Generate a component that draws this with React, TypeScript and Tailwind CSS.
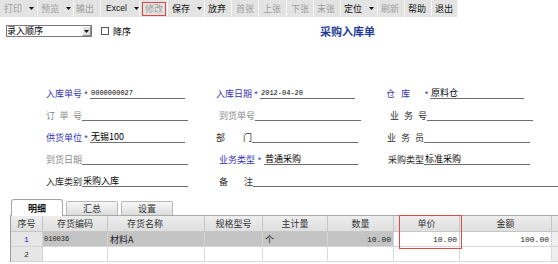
import React from "react";

type Tool = { t: string; w: string; pl: string; a?: boolean; on?: boolean; red?: boolean; latin?: boolean };

const tools: Tool[] = [
  { t: "打印", w: "w-[38px]", pl: "pl-[4px]", a: true },
  { t: "预览", w: "w-[36px]", pl: "pl-[3px]", a: true },
  { t: "输出", w: "w-[27px]", pl: "pl-[2px]" },
  { t: "Excel", w: "w-[39px]", pl: "pl-[5px]", a: true, on: true, latin: true },
  { t: "修改", w: "w-[28px]", pl: "pl-[2px]", red: true },
  { t: "保存", w: "w-[37px]", pl: "pl-[4px]", a: true, on: true },
  { t: "放弃", w: "w-[27px]", pl: "pl-[3px]", on: true },
  { t: "首张", w: "w-[27px]", pl: "pl-[4px]" },
  { t: "上张", w: "w-[28px]", pl: "pl-[4px]" },
  { t: "下张", w: "w-[27px]", pl: "pl-[4px]" },
  { t: "末张", w: "w-[27px]", pl: "pl-[3px]" },
  { t: "定位", w: "w-[37px]", pl: "pl-[3px]", a: true, on: true },
  { t: "刷新", w: "w-[27px]", pl: "pl-[3px]" },
  { t: "帮助", w: "w-[27px]", pl: "pl-[3px]", on: true },
  { t: "退出", w: "w-[26px]", pl: "pl-[3px]", on: true },
];

function Arrow({ cls }: { cls: string }) {
  return (
    <svg width="5" height="3" viewBox="0 0 5 3" className={`block shrink-0 ${cls}`}>
      <path d="M0 0H5L2.5 3Z" fill="#111" />
    </svg>
  );
}

const Lbl = ({ c, cls }: { c: string[]; cls: string }) => (
  <span className={`flex justify-between leading-[11px] shrink-0 ${cls}`}>
    {c.map((x, i) => (
      <span key={i}>{x}</span>
    ))}
  </span>
);

const Star = ({ cls }: { cls: string }) => (
  <span className={`shrink-0 text-center text-[#3434b8] font-['Liberation_Sans',sans-serif] text-[9px] leading-[9px] ${cls}`}>*</span>
);

const Line = ({ cls, v, mono }: { cls: string; v?: string; mono?: boolean }) => (
  <div className={`h-[13px] border-b border-[#6e6e6e] flex items-end shrink-0 ${cls}`}>
    {v ? (
      <span
        className={
          mono
            ? "pl-[1px] leading-[10px] text-[7px] text-black font-['Liberation_Mono',monospace]"
            : "pl-[1px] leading-[11px] text-black"
        }
      >
        {v}
      </span>
    ) : null}
  </div>
);

const BLUE = "text-[#3434b8]";
const GRAY = "text-[#8a8a8a]";
const DARK = "text-[#2a2a2a]";

const cols = [
  { h: "序号", w: "w-[32px]", j: "justify-center" },
  { h: "存货编码", w: "w-[65px]", j: "justify-center" },
  { h: "存货名称", w: "w-[97px]", j: "justify-start pl-[19px]" },
  { h: "规格型号", w: "w-[58px]", j: "justify-center" },
  { h: "主计量", w: "w-[65px]", j: "justify-center" },
  { h: "数量", w: "w-[66px]", j: "justify-center" },
  { h: "单价", w: "w-[66px]", j: "justify-center" },
  { h: "金额", w: "w-[92px]", j: "justify-center" },
];

export default function App() {
  return (
    <div className="relative w-[558px] h-[264px] overflow-hidden bg-white text-[9px] font-['Noto_Sans_CJK_SC','Noto_Sans',sans-serif]">
      {/* toolbar */}
      <div className="flex h-[17px] w-[458px] bg-[#e3e3e3] leading-[11px]">
        {tools.map((b, i) => (
          <div key={i} className={`flex items-center h-full border-r border-[#f6f6f6] ${b.w} ${b.pl}`}>
            {b.red ? (
              <span className="flex items-center h-[14px] px-[2px] border border-[#e04545] text-[#9c9c9c]">{b.t}</span>
            ) : (
              <span
                className={`${b.on ? "text-[#111]" : "text-[#9c9c9c]"} ${
                  b.latin ? "font-['Liberation_Sans',sans-serif] text-[8.5px]" : ""
                }`}
              >
                {b.t}
              </span>
            )}
            {b.a ? <Arrow cls="ml-[7px]" /> : null}
          </div>
        ))}
      </div>

      {/* select row + title */}
      <div className="flex items-center h-[12px] mt-[8px]">
        <div className="w-[320px] flex items-center">
          <div className="ml-[6px] w-[86px] h-[12px] border border-[#7a7a7a] flex items-center justify-between bg-white">
            <span className="leading-[10px] text-black">录入顺序</span>
            <span className="w-[9px] h-[10px] bg-[#e0e0e0] border border-t-white border-l-white border-r-[#8a8a8a] border-b-[#8a8a8a] flex items-center justify-center">
              <Arrow cls="" />
            </span>
          </div>
          <span className="ml-[9px] w-[8px] h-[8px] border border-[#555] bg-white shrink-0" />
          <span className="ml-[4px] leading-[11px] text-black">降序</span>
        </div>
        <span className="text-[11px] font-bold leading-[13px] text-[#1f3c9a]">采购入库单</span>
      </div>

      {/* form */}
      <div className="mt-[40px] flex flex-col">
        <div className="flex items-end h-[22px] pl-[46px]">
          <div className="w-[170px] flex items-end">
            <Lbl c={["入库单号"]} cls={`w-[36px] ${BLUE}`} />
            <Star cls="w-[8px]" />
            <Line cls="w-[95px]" v="0000000027" mono />
          </div>
          <div className="w-[170px] flex items-end">
            <Lbl c={["入库日期"]} cls={`w-[36px] ${BLUE}`} />
            <Star cls="w-[8px]" />
            <Line cls="w-[95px]" v="2012-04-20" mono />
          </div>
          <div className="flex-1 flex items-end">
            <Lbl c={["仓", "库"]} cls={`w-[24px] ${BLUE}`} />
            <Star cls="w-[20px] pl-[13px]" />
            <Line cls="w-[94px]" v="原料仓" />
          </div>
        </div>

        <div className="flex items-end h-[22px] pl-[46px]">
          <div className="w-[170px] flex items-end">
            <Lbl c={["订", "单", "号"]} cls={`w-[36px] ${GRAY}`} />
            <Line cls="w-[106px]" />
          </div>
          <div className="w-[170px] flex items-end">
            <Lbl c={["到货单号"]} cls={`ml-[3px] w-[36px] ${GRAY}`} />
            <Line cls="w-[106px]" />
          </div>
          <div className="flex-1 flex items-end">
            <Lbl c={["业", "务", "号"]} cls={`ml-[4px] w-[37px] ${DARK}`} />
            <Line cls="w-[106px]" />
          </div>
        </div>

        <div className="flex items-end h-[22px] pl-[46px]">
          <div className="w-[170px] flex items-end">
            <Lbl c={["供货单位"]} cls={`w-[36px] ${BLUE}`} />
            <Star cls="w-[8px]" />
            <Line cls="w-[95px]" v="无锡100" />
          </div>
          <div className="w-[170px] flex items-end">
            <Lbl c={["部", "门"]} cls={`w-[36px] ${DARK}`} />
            <Line cls="w-[106px]" />
          </div>
          <div className="flex-1 flex items-end">
            <Lbl c={["业", "务", "员"]} cls={`ml-[1px] w-[37px] ${DARK}`} />
            <Line cls="w-[106px]" />
          </div>
        </div>

        <div className="flex items-end h-[22px] pl-[46px]">
          <div className="w-[170px] flex items-end">
            <Lbl c={["到货日期"]} cls={`w-[36px] ${GRAY}`} />
            <Line cls="w-[106px]" />
          </div>
          <div className="w-[170px] flex items-end">
            <Lbl c={["业务类型"]} cls={`ml-[3px] w-[36px] ${BLUE}`} />
            <Star cls="w-[9px]" />
            <Line cls="w-[94px]" v="普通采购" />
          </div>
          <div className="flex-1 flex items-end">
            <Lbl c={["采购类型"]} cls={`ml-[2px] w-[36px] ${DARK}`} />
            <Line cls="w-[106px]" v="标准采购" />
          </div>
        </div>

        <div className="flex items-end h-[22px] pl-[46px]">
          <div className="w-[170px] flex items-end">
            <Lbl c={["入库类别"]} cls={`w-[36px] ${DARK}`} />
            <Line cls="w-[106px]" v="采购入库" />
          </div>
          <div className="flex-1 flex items-end">
            <Lbl c={["备", "注"]} cls={`ml-[3px] w-[34px] ${DARK}`} />
            <Line cls="flex-1" />
          </div>
        </div>
      </div>

      {/* tabs */}
      <div className="ml-[10px] mt-[12px] h-[17px] flex items-end pl-[1px] border-b border-[#a8a8a8] leading-[11px]">
        <div className="-mb-px w-[52px] h-[17px] border border-b-0 border-[#a5a5a5] rounded-t-[3px] bg-white font-bold text-[#111] flex items-center justify-center">
          明细
        </div>
        <div className="ml-[3px] w-[52px] h-[14px] border border-b-0 border-[#b8b8b8] rounded-t-[2px] bg-gradient-to-b from-[#f7f7f7] to-[#dcdcdc] text-[#333] flex items-center justify-center">
          汇总
        </div>
        <div className="ml-[3px] w-[52px] h-[14px] border border-b-0 border-[#b8b8b8] rounded-t-[2px] bg-gradient-to-b from-[#f7f7f7] to-[#dcdcdc] text-[#333] flex items-center justify-center">
          设置
        </div>
      </div>

      {/* table */}
      <div className="ml-[10px] border-l border-[#9d9d9d] leading-[11px]">
        <div className="flex h-[16px] bg-gradient-to-b from-[#ededed] to-[#dedede]">
          {cols.map((c) => (
            <div key={c.h} className={`${c.w} ${c.j} shrink-0 h-full border-r border-b border-[#c6c6c6] flex items-center text-[#333]`}>
              {c.h}
            </div>
          ))}
          <div className="flex-1 h-full border-b border-[#c6c6c6]" />
        </div>
        <div className="flex h-[15px]">
          <div className="w-[32px] shrink-0 bg-[#e6e6e6] border-r border-b border-[#d2d2d2] flex items-center justify-center text-[#2020c0] font-['Liberation_Mono',monospace] text-[8px]">1</div>
          <div className="w-[65px] shrink-0 bg-[#c4c4c4] border-r border-b border-[#d6d6d6] flex items-center pl-[1px] text-[#222] font-['Liberation_Mono',monospace] text-[7px]">010036</div>
          <div className="w-[97px] shrink-0 bg-[#c4c4c4] border-r border-b border-[#d6d6d6] flex items-center pl-[2px] text-[#222]">材料A</div>
          <div className="w-[58px] shrink-0 bg-[#c4c4c4] border-r border-b border-[#d6d6d6]" />
          <div className="w-[65px] shrink-0 bg-[#c4c4c4] border-r border-b border-[#d6d6d6] flex items-center pl-[2px] text-[#222]">个</div>
          <div className="w-[66px] shrink-0 bg-[#c4c4c4] border-r border-b border-[#d6d6d6] flex items-center justify-end pr-[2px] text-[#222] font-['Liberation_Mono',monospace] text-[8px]">10.00</div>
          <div className="w-[66px] shrink-0 bg-white border-r border-b border-[#d6d6d6] flex items-center justify-end pr-[2px] text-[#222] font-['Liberation_Mono',monospace] text-[8px]">10.00</div>
          <div className="w-[92px] shrink-0 bg-white border-r border-b border-[#d6d6d6] flex items-center justify-end pr-[2px] text-[#222] font-['Liberation_Mono',monospace] text-[8px]">100.00</div>
          <div className="flex-1 bg-[#efefef] border-b border-[#d6d6d6]" />
        </div>
        <div className="flex h-[15px]">
          <div className="w-[32px] shrink-0 bg-[#e6e6e6] border-r border-b border-[#d2d2d2] flex items-center justify-center text-[#333] font-['Liberation_Mono',monospace] text-[8px]">2</div>
          {cols.slice(1).map((c) => (
            <div key={c.h} className={`${c.w} shrink-0 bg-white border-r border-b border-[#dadada]`} />
          ))}
          <div className="flex-1 bg-[#efefef] border-b border-[#dadada]" />
        </div>
      </div>

      {/* red highlight overlay */}
      <div className="absolute left-[399px] top-[215px] w-[63px] h-[34px] border border-[#e24848]" />
    </div>
  );
}
